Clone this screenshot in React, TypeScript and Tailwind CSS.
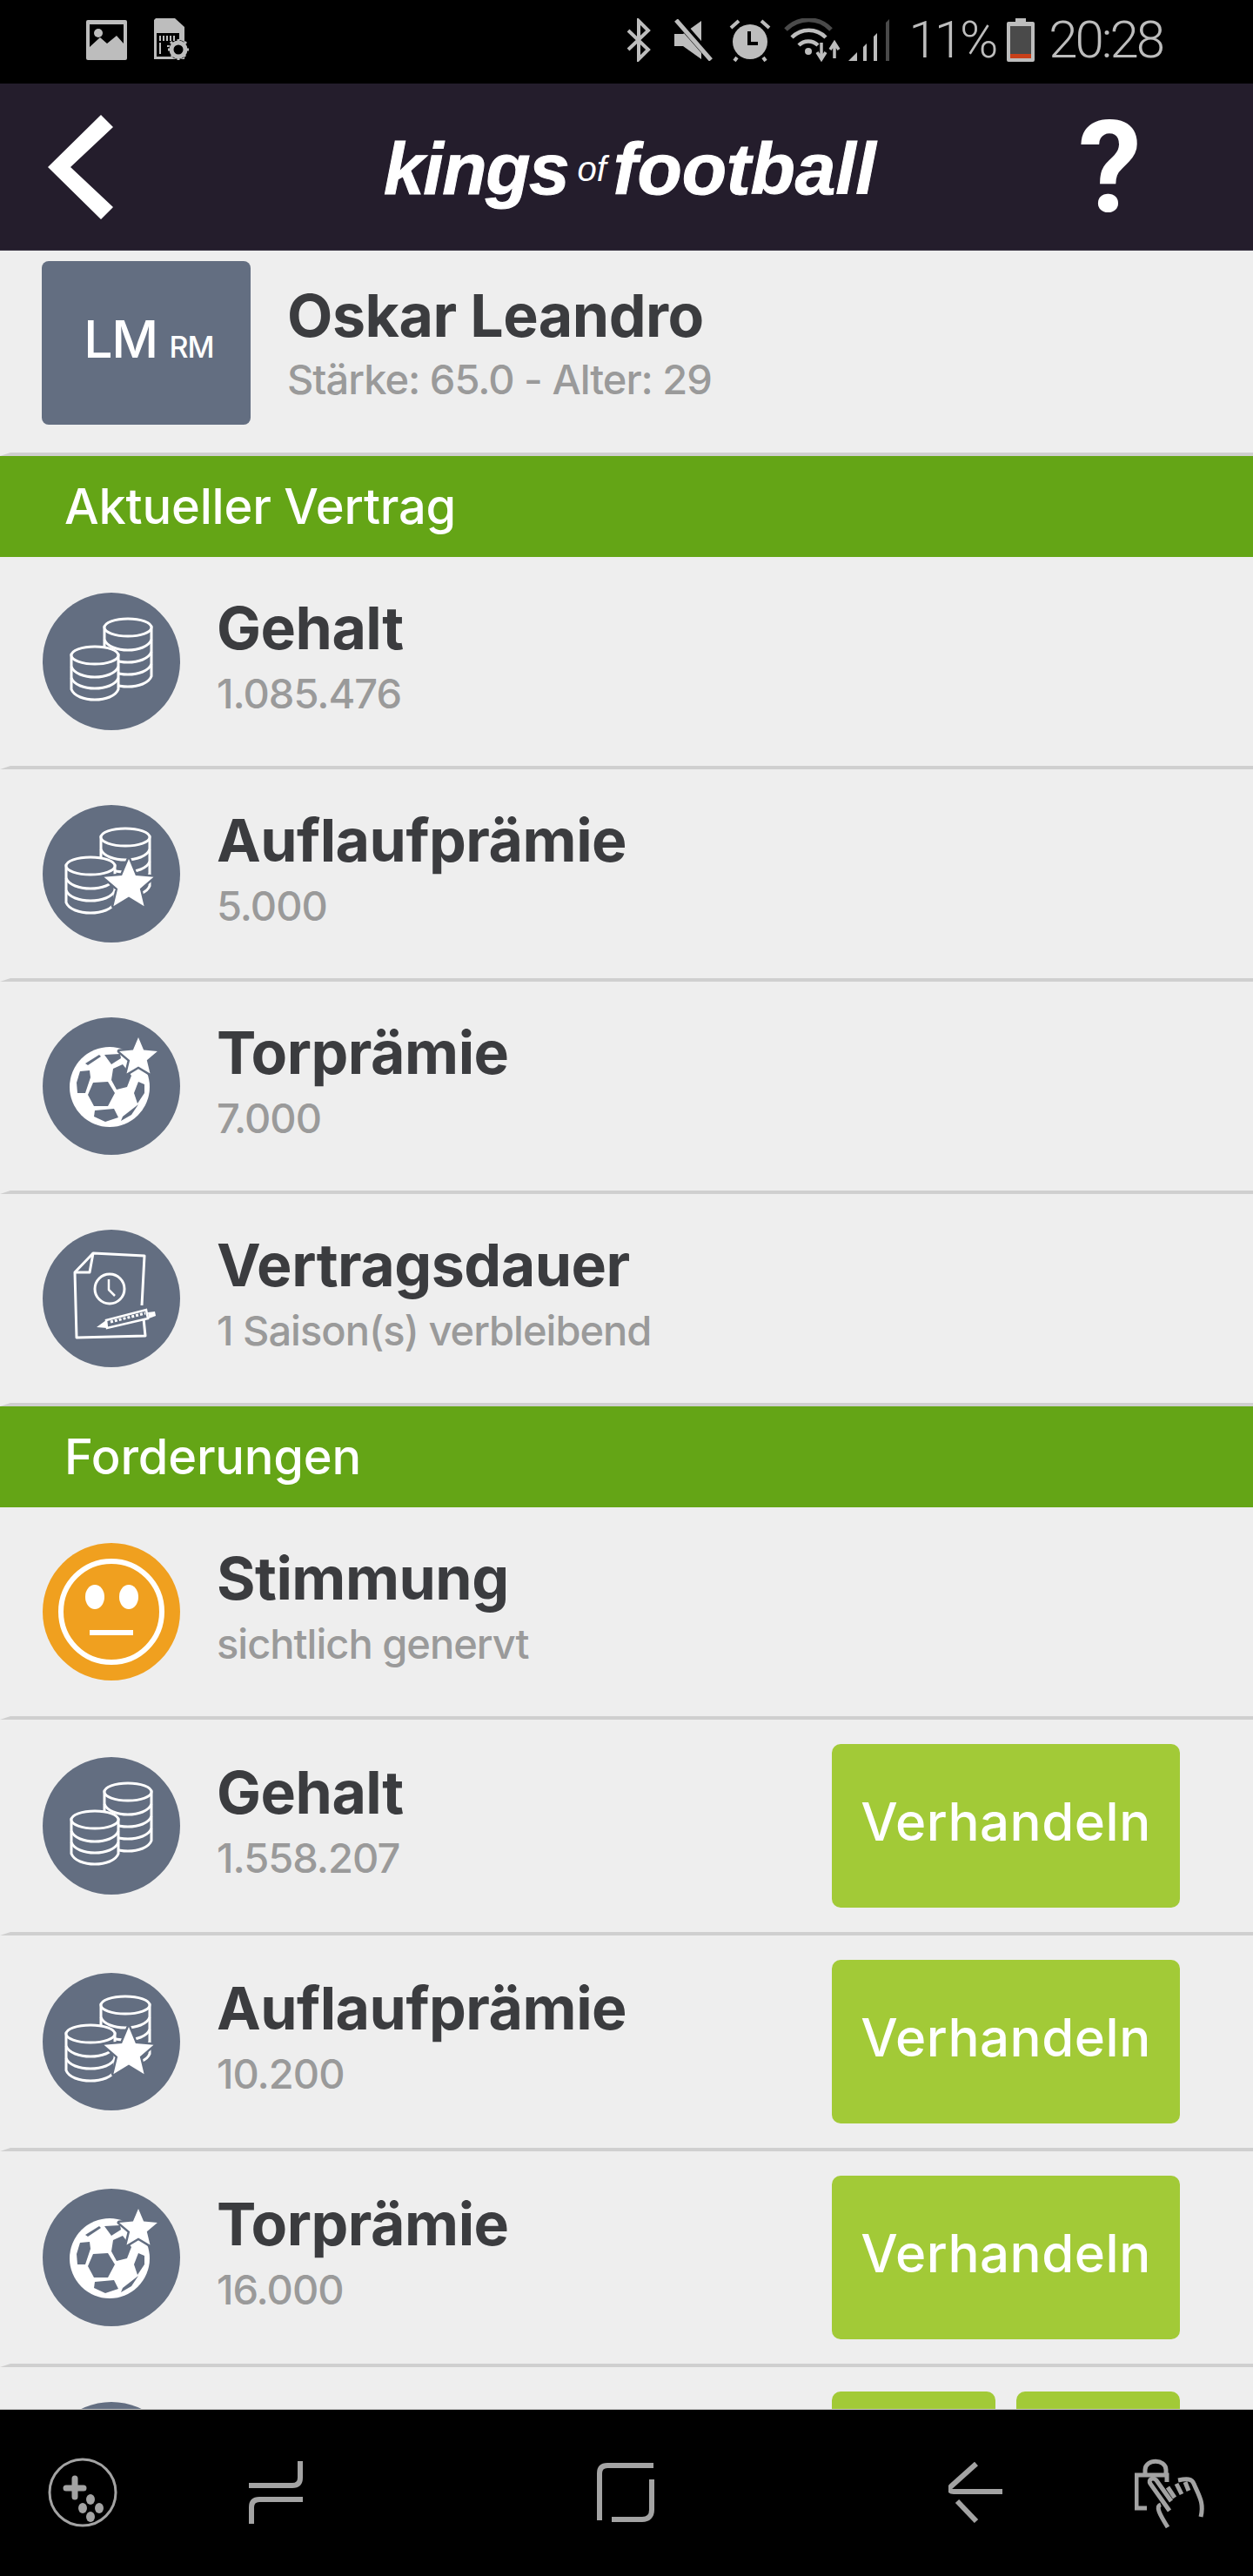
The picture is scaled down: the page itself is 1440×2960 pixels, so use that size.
const SLATE = "#636e81";

function Coins({ cx, top, rx, ry, step, bands }: { cx: number; top: number; rx: number; ry: number; step: number; bands: number }) {
  const bottom = top + step * bands;
  const arcs = [];
  for (let i = 1; i < bands; i++) {
    const y = top + step * i;
    arcs.push(<path key={i} d={`M${cx - rx} ${y}C${cx - rx + 6} ${y + ry * 1.6} ${cx + rx - 6} ${y + ry * 1.6} ${cx + rx} ${y}`} fill="none" />);
  }
  return (
    <g stroke="#fff" strokeWidth="3">
      <path
        d={`M${cx - rx} ${top}V${bottom}C${cx - rx + 6} ${bottom + ry * 1.6} ${cx + rx - 6} ${bottom + ry * 1.6} ${cx + rx} ${bottom}V${top}Z`}
        fill={SLATE}
      />
      {arcs}
      <ellipse cx={cx} cy={top} rx={rx} ry={ry} fill={SLATE} />
    </g>
  );
}

function Star({ cx, cy, r }: { cx: number; cy: number; r: number }) {
  const pts = [];
  for (let i = 0; i < 10; i++) {
    const rad = i % 2 === 0 ? r : r * 0.45;
    const a = (Math.PI / 5) * i - Math.PI / 2;
    pts.push(`${(cx + rad * Math.cos(a)).toFixed(1)},${(cy + rad * Math.sin(a)).toFixed(1)}`);
  }
  return <polygon points={pts.join(" ")} fill="#fff" stroke={SLATE} strokeWidth="5" paintOrder="stroke" strokeLinejoin="round" />;
}

function CoinsIcon() {
  return (
    <svg viewBox="0 0 158 158" className="h-full w-full">
      <Coins cx={98} top={40} rx={27} ry={10} step={14} bands={4} />
      <Coins cx={60} top={72} rx={27} ry={10} step={13} bands={3} />
    </svg>
  );
}

function CoinsStarIcon() {
  return (
    <svg viewBox="0 0 158 158" className="h-full w-full">
      <Coins cx={95} top={37} rx={28} ry={10} step={14} bands={4} />
      <Coins cx={55} top={70} rx={28} ry={10} step={14} bands={3} />
      <Star cx={99} cy={92} r={30} />
    </svg>
  );
}

function BallIcon() {
  return (
    <svg viewBox="0 0 158 158" className="h-full w-full">
      <circle cx="77" cy="80" r="46" fill="#fff" />
      <g fill={SLATE}>
        <polygon points="58,75 75,74 83,87 75,102 59,102 52,89" />
        <polygon points="81,59 92,54 102,67 97,80 85,83 79,72" />
        <polygon points="71,43 89,42 90,47 79,54" />
        <polygon points="49,53 65,43 67,45 52,55" />
        <polygon points="43,62 54,61 55,69 49,87 40,87 39,75" />
        <polygon points="110,74 117,77 117,87 109,99 105,87" />
        <polygon points="60,107 82,105 87,115 72,120 59,114" />
        <polygon points="92,114 110,100 102,112 90,119" />
      </g>
      <Star cx={110} cy={46} r={23} />
    </svg>
  );
}

function ContractIcon() {
  return (
    <svg viewBox="0 0 158 158" className="h-full w-full">
      <g fill="none" stroke="#fff" strokeWidth="3" strokeLinejoin="round">
        <path d="M114 87L117 30L58 27L37 49L39 124L118 122L116 102" />
        <path d="M37 49H54L58 27" />
        <circle cx="77" cy="68" r="17" />
        <path d="M76 57V69L83 76" strokeWidth="2.5" />
      </g>
      <path d="M73 104L119 92L121 102L74 113Z" fill="none" stroke="#fff" strokeWidth="2.5" />
      <path d="M62 112L73 104L74 113Z" fill="#fff" />
      <path d="M78 106L118 96" stroke="#fff" strokeWidth="3" strokeDasharray="3 2" />
      <path d="M121 95L129 94L130 99L122 102Z" fill="#fff" />
    </svg>
  );
}

function MoodIcon() {
  return (
    <svg viewBox="0 0 158 158" className="h-full w-full">
      <circle cx="79" cy="79" r="58" fill="none" stroke="#fff" strokeWidth="6" />
      <ellipse cx="60" cy="62" rx="11" ry="14" fill="#fff" />
      <ellipse cx="99" cy="62" rx="11" ry="14" fill="#fff" />
      <rect x="54" y="100" width="50" height="6" fill="#fff" />
    </svg>
  );
}

function Row({ title, value, icon, mood, children }: { title: string; value: string; icon: React.ReactNode; mood?: boolean; children?: React.ReactNode }) {
  return (
    <div className="flex min-h-[244px] items-center border-b-4 border-l-[12px] border-b-[#cfcfcf] border-l-transparent pl-[37px] pr-[84px]">
      <div className={`h-[158px] w-[158px] shrink-0 rounded-full ${mood ? "bg-[#f0a01f]" : "bg-[#636e81]"}`}>{icon}</div>
      <div className="ml-[42px] flex-1 pb-[17px]">
        <div className="text-[68px] font-bold leading-[80px] tracking-[-0.5px] text-[#3b3c3f]">{title}</div>
        <div className="mt-[11px] text-[47px] font-medium leading-[50px] tracking-[-1px] text-[#9a9a9a]">{value}</div>
      </div>
      {children}
    </div>
  );
}

function NegotiateRow(props: { title: string; value: string; icon: React.ReactNode }) {
  return (
    <Row {...props}>
      <button className="my-[28px] h-[188px] w-[400px] rounded-[10px] bg-[#a2ca37] pb-[10px] text-[60px] font-medium tracking-[0.5px] text-white">Verhandeln</button>
    </Row>
  );
}

function SectionHeader({ label }: { label: string }) {
  return <div className="flex h-[116px] items-center bg-[#64a516] pl-[74px] text-[56px] font-medium tracking-[-0.2px] text-white">{label}</div>;
}

function StatusIcons() {
  return (
    <div className="flex items-center">
      <svg width="32" height="50" viewBox="0 0 32 50" className="mr-[24px]">
        <path d="M3 14L26 36L15 47V3L26 14L3 36" fill="none" stroke="#bdbdbd" strokeWidth="4" />
      </svg>
      <svg width="46" height="48" viewBox="0 0 46 48" className="mr-[16px]">
        <path d="M0 17H10L31 2V46L10 31H0Z" fill="#bdbdbd" />
        <path d="M3 0L45 48" stroke="#000" strokeWidth="9" />
        <path d="M2 1L42 47" stroke="#bdbdbd" strokeWidth="5" />
      </svg>
      <svg width="50" height="50" viewBox="0 0 50 50" className="mr-[14px]">
        <circle cx="25" cy="27" r="20" fill="#bdbdbd" />
        <path d="M24 15V29H34" fill="none" stroke="#000" strokeWidth="4" />
        <path d="M3 11L12 3M47 11L38 3M10 45L7 49M40 45L43 49" stroke="#bdbdbd" strokeWidth="4" />
      </svg>
      <svg width="68" height="50" viewBox="0 0 68 50" className="mr-[6px]">
        <path d="M2 13C17 -2 40 -2 54 13" fill="none" stroke="#4a4a4a" strokeWidth="5" />
        <path d="M9 22C20 11 37 11 48 22M17 31C23 25 33 25 39 31" fill="none" stroke="#bdbdbd" strokeWidth="4.5" />
        <circle cx="28" cy="38" r="4" fill="#bdbdbd" />
        <path d="M43 28V44M38 39L43 47L48 39M58 46V30M53 36L58 28L63 36" fill="none" stroke="#bdbdbd" strokeWidth="3.5" />
      </svg>
      <svg width="50" height="50" viewBox="0 0 50 50" className="mr-[19px]">
        <polygon points="0,49 10,39 10,49" fill="#bdbdbd" />
        <polygon points="17,33 21,29 21,49 17,49" fill="#bdbdbd" />
        <polygon points="29,21 33,17 33,49 29,49" fill="#bdbdbd" />
        <polygon points="43,5 47,1 47,49 43,49" fill="#4a4a4a" />
      </svg>
      <span className="font-['Roboto',sans-serif] text-[60px] font-light leading-none tracking-[-4px] text-[#bdbdbd]">11%</span>
      <svg width="32" height="50" viewBox="0 0 32 50" className="ml-[14px] mr-[16px]">
        <path d="M10 0H22V4H30A2 2 0 0 1 32 6V48A2 2 0 0 1 30 50H2A2 2 0 0 1 0 48V6A2 2 0 0 1 2 4H10Z" fill="#bdbdbd" />
        <rect x="4" y="9" width="24" height="37" fill="#4a4a4a" />
        <rect x="4" y="41" width="24" height="5" fill="#c8401a" />
      </svg>
      <span className="font-['Roboto',sans-serif] text-[60px] font-light leading-none tracking-[-3px] text-[#bdbdbd]">20:28</span>
    </div>
  );
}

function BottomNav() {
  return (
    <div className="flex h-[192px] shrink-0 items-center border-t border-t-[#cccccc] bg-black pb-[2px] pl-[55px]">
      <svg width="80" height="80" viewBox="0 0 80 80" fill="none" stroke="#a3a3a3">
        <ellipse cx="40" cy="40" rx="38" ry="38" strokeWidth="3" />
        <path d="M31 24V45M21 35H41" strokeWidth="7" strokeLinecap="round" />
        <g fill="#a3a3a3" stroke="none">
          <ellipse cx="49" cy="48" rx="5" ry="6" />
          <ellipse cx="40" cy="58" rx="5" ry="6" />
          <ellipse cx="59" cy="58" rx="5" ry="6" />
          <ellipse cx="49" cy="68" rx="5" ry="6" />
        </g>
      </svg>
      <svg width="62" height="72" viewBox="0 0 62 72" fill="none" stroke="#a3a3a3" strokeWidth="6" className="ml-[151px]">
        <path d="M0 28H50C57 28 59 24 59 19V0" />
        <path d="M62 44H12C5 44 3 48 3 53V72" />
      </svg>
      <svg width="66" height="68" viewBox="0 0 66 68" fill="none" stroke="#a3a3a3" strokeWidth="6" className="ml-[338px]">
        <path d="M3 66V12C3 6 6 3 12 3H65" />
        <path d="M17 65H52C59 65 63 61 63 54V19" />
      </svg>
      <svg width="62" height="70" viewBox="0 0 62 70" fill="none" stroke="#a3a3a3" strokeWidth="6" className="ml-[338px]">
        <path d="M32 2L3 28C0 31 1 34 6 34H62" />
        <path d="M10 45L32 68" />
      </svg>
      <svg width="84" height="84" viewBox="0 0 84 84" fill="none" stroke="#a3a3a3" strokeWidth="5" className="ml-[152px]">
        <path d="M12 20V16C12 3 36 3 36 16V20" />
        <path d="M37 30V22H2V60H14" />
        <path d="M40 63L18 32C15 27 21 24 25 28L42 52" />
        <path d="M38 36L46 48M48 32L54 44M58 30L62 40" />
        <path d="M50 28C60 26 66 26 68 32C74 46 80 54 76 70" />
        <path d="M30 56C24 58 28 66 38 82" />
      </svg>
    </div>
  );
}

export default function App() {
  return (
    <div className="flex h-[2960px] w-[1440px] flex-col overflow-hidden bg-[#eeeeee] font-['Inter',sans-serif]">
      <div className="flex h-[96px] shrink-0 items-center justify-between bg-black pb-[4px] pl-[99px] pr-[104px]">
        <div className="flex items-center">
          <svg width="47" height="46" viewBox="0 0 47 46" className="mr-[31px]">
            <rect width="47" height="46" rx="2" fill="#bdbdbd" />
            <rect x="4" y="5" width="39" height="34" fill="#000" />
            <path d="M4 40V31L16 20L24 27L35 18L43 27V40Z" fill="#bdbdbd" />
            <circle cx="14" cy="15" r="5" fill="#bdbdbd" />
          </svg>
          <svg width="41" height="50" viewBox="0 0 41 50">
            <path d="M2 0H24L35 10V47H0V2Z" fill="#bdbdbd" />
            <rect x="3" y="17" width="26" height="27" fill="#000" />
            <path d="M7 20V26M11 20V26M15 20V26M19 20V26M23 20V26M7 28V41M15 32H23M19 32V41" stroke="#bdbdbd" strokeWidth="2" />
            <circle cx="28" cy="36" r="11" fill="#000" />
            <circle cx="28" cy="36" r="8" fill="none" stroke="#bdbdbd" strokeWidth="5" />
            <path d="M28 24V48M16 36H40M19 27L37 45M37 27L19 45" stroke="#bdbdbd" strokeWidth="3" strokeDasharray="4 16" strokeDashoffset="0" />
          </svg>
        </div>
        <StatusIcons />
      </div>

      <header className="flex h-[192px] shrink-0 items-center border-b border-b-[#3a3442] bg-[#241d2c] pl-[55px] pr-[128px]">
        <svg width="76" height="120" viewBox="0 0 76 120">
          <polygon points="61,0 75,14 26,60 75,106 61,120 0,60" fill="#fff" />
        </svg>
        <div className="ml-[310px] flex-1 whitespace-nowrap pt-[4px] font-['Liberation_Sans',sans-serif] italic leading-none text-white">
          <span className="text-[84px] font-bold tracking-[-1.4px] [-webkit-text-stroke:1px_#fff]">kings</span>
          <span className="ml-[10px] mr-[8px] align-[15px] text-[40px]">of</span>
          <span className="text-[84px] font-bold tracking-[-0.2px] [-webkit-text-stroke:1px_#fff]">football</span>
        </div>
        <span className="pt-[4px] font-['Roboto',sans-serif] text-[146px] font-bold leading-none text-white">?</span>
      </header>

      <main className="min-h-0 flex-1 overflow-hidden">
        <div className="flex h-[236px] items-start border-b-4 border-l-[12px] border-b-[#cfcfcf] border-l-transparent pl-[36px] pt-[12px]">
          <div className="flex h-[188px] w-[240px] shrink-0 items-baseline justify-center rounded-[8px] bg-[#636e81] pl-[6px] pt-[60px] font-medium text-white">
            <span className="text-[59px] leading-none tracking-[-1.5px]">LM</span>
            <span className="ml-[14px] text-[34px] leading-none tracking-[-1px]">RM</span>
          </div>
          <div className="ml-[42px] pt-[22px]">
            <div className="text-[68px] font-bold leading-[80px] tracking-[-0.5px] text-[#3b3c3f]">Oskar Leandro</div>
            <div className="mt-[9px] text-[47px] font-medium leading-[50px] tracking-[-1px] text-[#9a9a9a]">Stärke: 65.0 - Alter: 29</div>
          </div>
        </div>

        <SectionHeader label="Aktueller Vertrag" />
        <Row title="Gehalt" value="1.085.476" icon={<CoinsIcon />} />
        <Row title="Auflaufprämie" value="5.000" icon={<CoinsStarIcon />} />
        <Row title="Torprämie" value="7.000" icon={<BallIcon />} />
        <Row title="Vertragsdauer" value="1 Saison(s) verbleibend" icon={<ContractIcon />} />

        <SectionHeader label="Forderungen" />
        <Row title="Stimmung" value="sichtlich genervt" icon={<MoodIcon />} mood />
        <NegotiateRow title="Gehalt" value="1.558.207" icon={<CoinsIcon />} />
        <NegotiateRow title="Auflaufprämie" value="10.200" icon={<CoinsStarIcon />} />
        <NegotiateRow title="Torprämie" value="16.000" icon={<BallIcon />} />

        <div className="flex pl-[36px] pr-[84px] pt-[28px]">
          <div className="ml-[13px] mt-[12px] h-[158px] w-[158px] shrink-0 rounded-full bg-[#636e81]" />
          <div className="ml-auto h-[188px] w-[188px] rounded-[10px] bg-[#a2ca37]" />
          <div className="ml-[24px] h-[188px] w-[188px] rounded-[10px] bg-[#a2ca37]" />
        </div>
      </main>

      <BottomNav />
    </div>
  );
}
